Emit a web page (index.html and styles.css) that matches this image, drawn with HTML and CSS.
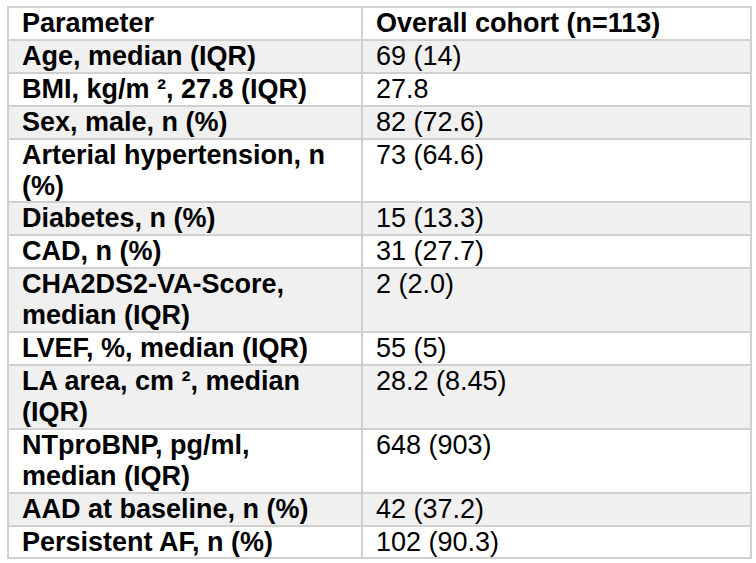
FILE: index.html
```html
<!DOCTYPE html>
<html>
<head>
<meta charset="utf-8">
<link rel="stylesheet" href="styles.css">
</head>
<body>
<table class="data">
  <tr class="head"><td class="param">Parameter</td><td class="val">Overall cohort (n=113)</td></tr>
  <tr><td class="param">Age, median (IQR)</td><td class="val">69 (14)</td></tr>
  <tr><td class="param">BMI, kg/m ², 27.8 (IQR)</td><td class="val">27.8</td></tr>
  <tr><td class="param">Sex, male, n (%)</td><td class="val">82 (72.6)</td></tr>
  <tr><td class="param">Arterial hypertension, n (%)</td><td class="val">73 (64.6)</td></tr>
  <tr><td class="param">Diabetes, n (%)</td><td class="val">15 (13.3)</td></tr>
  <tr><td class="param">CAD, n (%)</td><td class="val">31 (27.7)</td></tr>
  <tr><td class="param">CHA2DS2-VA-Score, median (IQR)</td><td class="val">2 (2.0)</td></tr>
  <tr><td class="param">LVEF, %, median (IQR)</td><td class="val">55 (5)</td></tr>
  <tr><td class="param">LA area, cm ², median (IQR)</td><td class="val">28.2 (8.45)</td></tr>
  <tr><td class="param">NTproBNP, pg/ml, median (IQR)</td><td class="val">648 (903)</td></tr>
  <tr><td class="param">AAD at baseline, n (%)</td><td class="val">42 (37.2)</td></tr>
  <tr><td class="param">Persistent AF, n (%)</td><td class="val">102 (90.3)</td></tr>
</table>
</body>
</html>
```
FILE: styles.css
```css
html, body {
  background: #ffffff;
}
body {
  margin: 6px 0 0 7px;
  font-family: "Liberation Sans", Arial, sans-serif;
  font-size: 27px;
  color: #000;
}
.data {
  border-collapse: collapse;
  width: 745px;
  table-layout: fixed;
}
.data td {
  border: 2px solid #d0d0d0;
  padding: 0 13px;
  line-height: 30.9px;
  vertical-align: top;
  text-align: left;
}
.data tr:nth-child(even) td {
  background: #f0f0f0;
}
.param {
  width: 326px;
  font-weight: bold;
}
.val {
  font-weight: normal;
}
.head .val {
  font-weight: bold;
}
```
